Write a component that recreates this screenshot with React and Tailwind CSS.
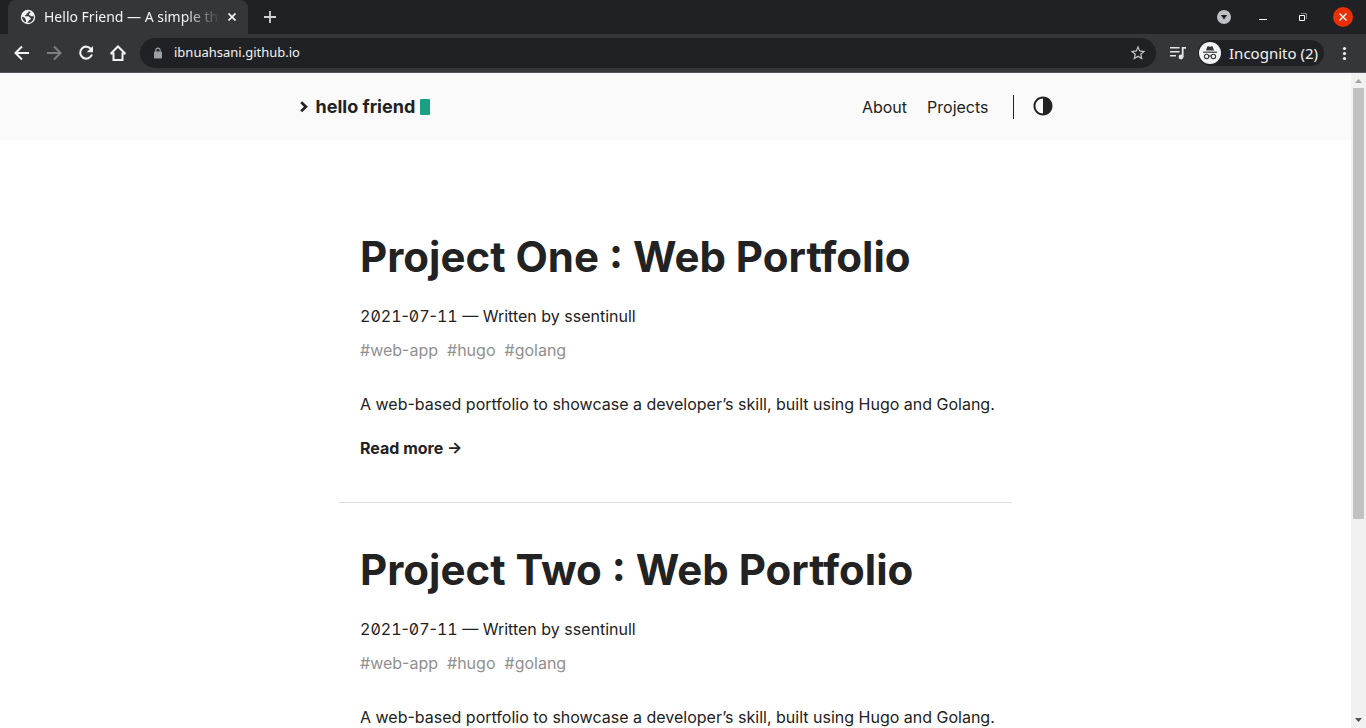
import React from "react";
import { MdStarBorder } from "react-icons/md";

const posts = [
  {
    title: "Project One : Web Portfolio",
    date: "2021-07-11",
    author: "ssentinull",
    tags: ["web-app", "hugo", "golang"],
    summary:
      "A web-based portfolio to showcase a developer’s skill, built using Hugo and Golang.",
  },
  {
    title: "Project Two : Web Portfolio",
    date: "2021-07-11",
    author: "ssentinull",
    tags: ["web-app", "hugo", "golang"],
    summary:
      "A web-based portfolio to showcase a developer’s skill, built using Hugo and Golang.",
  },
];

function GlobeIcon() {
  return (
    <svg viewBox="0 0 16 16" className="size-4 shrink-0" aria-hidden="true">
      <circle cx="8" cy="8" r="7.2" fill="#f1f3f4" />
      <path
        d="M8.300 2.300c.9 1-.1 1.700-1.200 2-.8.3-.3 1.500-1.300 1.700-.9.2-1.200.8-.5 1.300h2.900c1.200 0 1.300 1.300 2.200 1.700 1.100.4.4 1.600-.7 1.700-1 .2-.7 1.500-1.700 2-.7.400-.5 1-.2 1.300 3.500-.1 6-2.800 6-6 0-.5-.1-1-.2-1.400-.8 1-2.100 1-2.800.2-.5-.7-1.900-.3-1.900-1.300 0-1.200 1.200-1 1.700-1.900.2-.5-1-1.300-2.300-1.300Z"
        fill="#35363a"
      />
      <path
        d="M2 7.500c1 .2 1.400 1 2.400 1.300 1.200.3.6 1.500 1.300 2.200.6.700.4 1.500.1 2.300C3.500 12.400 2 10.200 2 7.500Z"
        fill="#35363a"
      />
    </svg>
  );
}

function ArrowIcon({ forward }) {
  return (
    <svg viewBox="0 0 20 20" className="size-5" fill="none" stroke="currentColor" strokeWidth="2">
      {forward ? <path d="M3 10h13M10 3.500l6.500 6.500-6.500 6.500" /> : <path d="M17 10H4M10 3.500L3.500 10l6.500 6.500" />}
    </svg>
  );
}

function ReloadIcon() {
  return (
    <svg viewBox="0 0 20 20" className="size-5" fill="none" stroke="currentColor" strokeWidth="2.100">
      <path d="M15.300 6.500A6 6 0 1 0 15.900 11.500" />
      <path d="M17 3v6.300h-6.300Z" fill="currentColor" stroke="none" />
    </svg>
  );
}

function HomeIcon() {
  return (
    <svg viewBox="0 0 20 20" className="size-5" fill="none" stroke="currentColor" strokeWidth="2">
      <path d="M2.700 10.800 10 3.500l7.300 7.300M5.500 9.500V17h9V9.500" />
      <path d="M2.500 11h3M14.500 11h3" strokeWidth="1.200" />
    </svg>
  );
}

function LockIcon() {
  return (
    <svg viewBox="0 0 12 12" className="size-3" aria-hidden="true">
      <rect x="2" y="4.500" width="8" height="7" rx="0.800" fill="#9aa0a6" />
      <path d="M3.900 5V3.200a2.100 2.100 0 0 1 4.200 0V5" fill="none" stroke="#9aa0a6" strokeWidth="1.200" />
    </svg>
  );
}

function MediaIcon() {
  return (
    <svg viewBox="0 0 20 20" className="size-5" fill="none" stroke="#e4e5e8" strokeWidth="1.600">
      <path d="M2 4.800h9.500M2 8.800h9.500M2 12.800h6" />
      <path d="M14.700 14V4.800h3.300" strokeWidth="1.800" />
      <circle cx="13" cy="14" r="2.400" fill="#e4e5e8" stroke="none" />
    </svg>
  );
}

function IncognitoIcon() {
  return (
    <svg viewBox="0 0 22 22" className="size-[22px]" aria-hidden="true">
      <circle cx="11" cy="11" r="11" fill="#f1f3f4" />
      <path
        d="M7 8.500 8.200 4.800Q8.500 4 9.300 4.200L11 4.700 12.700 4.200Q13.500 4 13.800 4.800L15 8.500Z"
        fill="#35363a"
      />
      <path d="M4 10.200h14" stroke="#35363a" strokeWidth="1.200" />
      <g fill="none" stroke="#35363a" strokeWidth="1.100">
        <circle cx="7.600" cy="14.400" r="2.200" />
        <circle cx="14.400" cy="14.400" r="2.200" />
        <path d="M9.800 14.200q1.200-.8 2.400 0" />
      </g>
    </svg>
  );
}

function TabStrip() {
  return (
    <div className="flex h-[34px] items-end bg-[#202124] pl-2 pr-[13px]">
      <div className="flex h-full w-60 items-center rounded-t-lg bg-[#35363a] pl-3 pr-2">
        <GlobeIcon />
        <span className="ml-2 flex-1 whitespace-nowrap text-sm text-[#f1f3f4] [mask-image:linear-gradient(to_right,black_80%,transparent)]">
          Hello Friend — A simple th
        </span>
        <button type="button" aria-label="Close tab" className="ml-1 grid size-4 place-items-center">
          <svg viewBox="0 0 8 8" className="size-2">
            <path d="M.5.5l7 7M7.500.5l-7 7" stroke="#f1f3f4" strokeWidth="1.700" />
          </svg>
        </button>
      </div>
      <button type="button" aria-label="New tab" className="ml-3 grid h-full w-5 place-items-center">
        <svg viewBox="0 0 12 12" className="size-3">
          <path d="M6 0v12M0 6h12" stroke="#d0d2d6" strokeWidth="1.800" />
        </svg>
      </button>
      <div className="ml-auto flex h-full items-center">
        <button type="button" aria-label="Search tabs" className="grid size-5 place-items-center">
          <svg viewBox="0 0 14 14" className="size-[14px]">
            <circle cx="7" cy="7" r="7" fill="#bdc1c6" />
            <path d="M3.800 5h6.400L7 9.600Z" fill="#202124" />
          </svg>
        </button>
        <button type="button" aria-label="Minimize" className="ml-[19px] grid size-5 place-items-center">
          <svg viewBox="0 0 8 8" className="size-2">
            <path d="M0 6.500h8" stroke="#fff" />
          </svg>
        </button>
        <button type="button" aria-label="Restore" className="ml-5 grid size-5 place-items-center">
          <svg viewBox="0 0 8 8" className="size-2" fill="none">
            <path d="M.5 2.500h5v5h-5z" stroke="#fff" />
            <path d="M2 .5h5.500V6" stroke="#85868a" />
          </svg>
        </button>
        <button
          type="button"
          aria-label="Close window"
          className="ml-5 grid size-5 place-items-center rounded-full bg-[#e92f05]"
        >
          <svg viewBox="0 0 8 8" className="size-2">
            <path d="M.5.5l7 7M7.500.5l-7 7" stroke="#fff" strokeWidth="1.400" />
          </svg>
        </button>
      </div>
    </div>
  );
}

function Toolbar() {
  return (
    <div className="flex h-[39px] items-center border-b border-[#55565a] bg-[#35363a] px-3">
      <div className="flex items-center gap-3 text-[#f1f3f4]">
        <button type="button" aria-label="Back">
          <ArrowIcon />
        </button>
        <button type="button" aria-label="Forward" className="text-[#7e7f83]">
          <ArrowIcon forward />
        </button>
        <button type="button" aria-label="Reload">
          <ReloadIcon />
        </button>
        <button type="button" aria-label="Home">
          <HomeIcon />
        </button>
      </div>
      <div className="ml-3 flex h-[30px] flex-1 items-center rounded-full bg-[#202124] pl-3 pr-2">
        <LockIcon />
        <input
          type="text"
          aria-label="Address"
          defaultValue="ibnuahsani.github.io"
          className="ml-[10px] min-w-0 flex-1 bg-transparent text-[13px] text-[#f1f3f4] outline-none"
        />
        <button type="button" aria-label="Bookmark this page" className="grid size-5 place-items-center">
          <MdStarBorder className="size-[18px] text-[#c6c8cc]" />
        </button>
      </div>
      <button type="button" aria-label="Media controls" className="ml-3">
        <MediaIcon />
      </button>
      <button
        type="button"
        className="ml-[10px] flex h-[26px] items-center gap-2 whitespace-nowrap rounded-full bg-[#202124] pl-px pr-[6px] text-[15px] text-[#f1f3f4]"
      >
        <IncognitoIcon />
        Incognito (2)
      </button>
      <button type="button" aria-label="Menu" className="ml-[10px]">
        <svg viewBox="0 0 20 20" className="size-5" fill="#f1f3f4">
          <circle cx="10.500" cy="5.500" r="1.600" />
          <circle cx="10.500" cy="10.500" r="1.600" />
          <circle cx="10.500" cy="15.500" r="1.600" />
        </svg>
      </button>
    </div>
  );
}

function SiteHeader() {
  return (
    <header className="bg-[#fafafa]">
      <div className="mx-auto flex h-[67px] max-w-[796px] items-center px-5">
        <a href="#home" className="flex items-center text-lg font-bold">
          <svg viewBox="0 0 12 12" className="size-3" fill="none" aria-hidden="true">
            <path d="M3.200 1.300l4.700 4.400-4.700 4.500" stroke="#222" strokeWidth="2.700" />
          </svg>
          <span className="ml-[6px]">hello friend</span>
          <span className="ml-[5px] h-4 w-[10px] rounded-[1px] bg-[#1ba085]" />
        </a>
        <nav className="ml-auto flex items-center gap-5">
          <a href="#about">About</a>
          <a href="#projects">Projects</a>
        </nav>
        <span className="ml-6 h-6 w-px bg-[#222]" />
        <button type="button" aria-label="Toggle theme" className="ml-[18px]">
          <svg viewBox="0 0 44 44" className="size-[22px]" fill="#222">
            <path
              fillRule="evenodd"
              d="M22 39C32.493 39 41 30.493 41 20S32.493 1 22 1 3 9.507 3 20s8.507 19 19 19ZM7 20C7 11.716 13.716 5 22 5v30C13.716 35 7 28.284 7 20Z"
            />
          </svg>
        </button>
      </div>
    </header>
  );
}

function PostDate({ value }) {
  return (
    <time dateTime={value}>
      {value.split("-").map((part, index) => (
        <React.Fragment key={index}>
          {index > 0 && "-"}
          <span className="[font-feature-settings:'tnum','zero','ss01']">{part}</span>
        </React.Fragment>
      ))}
    </time>
  );
}

function Post({ post }) {
  return (
    <article className="border-b border-[#dcdcdc] pb-[42px] pl-[21px] pr-2 pt-10">
      <h1 className="text-[42px] font-bold leading-[54px]">
        <a href="#post">{post.title}</a>
      </h1>
      <p className="mt-5">
        <PostDate value={post.date} /> — Written by {post.author}
      </p>
      <p className="mt-[10px] flex gap-[9px] text-[#909090]">
        {post.tags.map((tag) => (
          <a key={tag} href="#tag">
            #{tag}
          </a>
        ))}
      </p>
      <p className="mt-[30px]">{post.summary}</p>
      <a href="#post" className="mt-5 inline-block align-top font-bold">
        Read more →
      </a>
    </article>
  );
}

function Scrollbar() {
  return (
    <div className="flex w-[15px] shrink-0 flex-col bg-[#f1f1f1]" aria-hidden="true">
      <svg viewBox="0 0 15 15" className="size-[15px] shrink-0">
        <path d="M4 10h7L7.500 6Z" fill="#a3a3a3" />
      </svg>
      <div className="flex-1 px-[2px]">
        <div className="h-[69%] bg-[#c1c1c1]" />
      </div>
      <svg viewBox="0 0 15 15" className="size-[15px] shrink-0">
        <path d="M4 5h7L7.500 9Z" fill="#505050" />
      </svg>
    </div>
  );
}

export default function App() {
  return (
    <div className="flex h-screen flex-col overflow-hidden">
      <div className="shrink-0 font-['Noto_Sans',sans-serif]">
        <TabStrip />
        <Toolbar />
      </div>
      <div className="flex min-h-0 flex-1 bg-white">
        <div className="min-w-0 flex-1 overflow-hidden font-['Inter',sans-serif] text-base text-[#222] [font-feature-settings:'case','calt','zero','ss01']">
          <SiteHeader />
          <main className="mx-auto mt-[50px] max-w-[673px]">
            {posts.map((post) => (
              <Post key={post.title} post={post} />
            ))}
          </main>
        </div>
        <Scrollbar />
      </div>
    </div>
  );
}
